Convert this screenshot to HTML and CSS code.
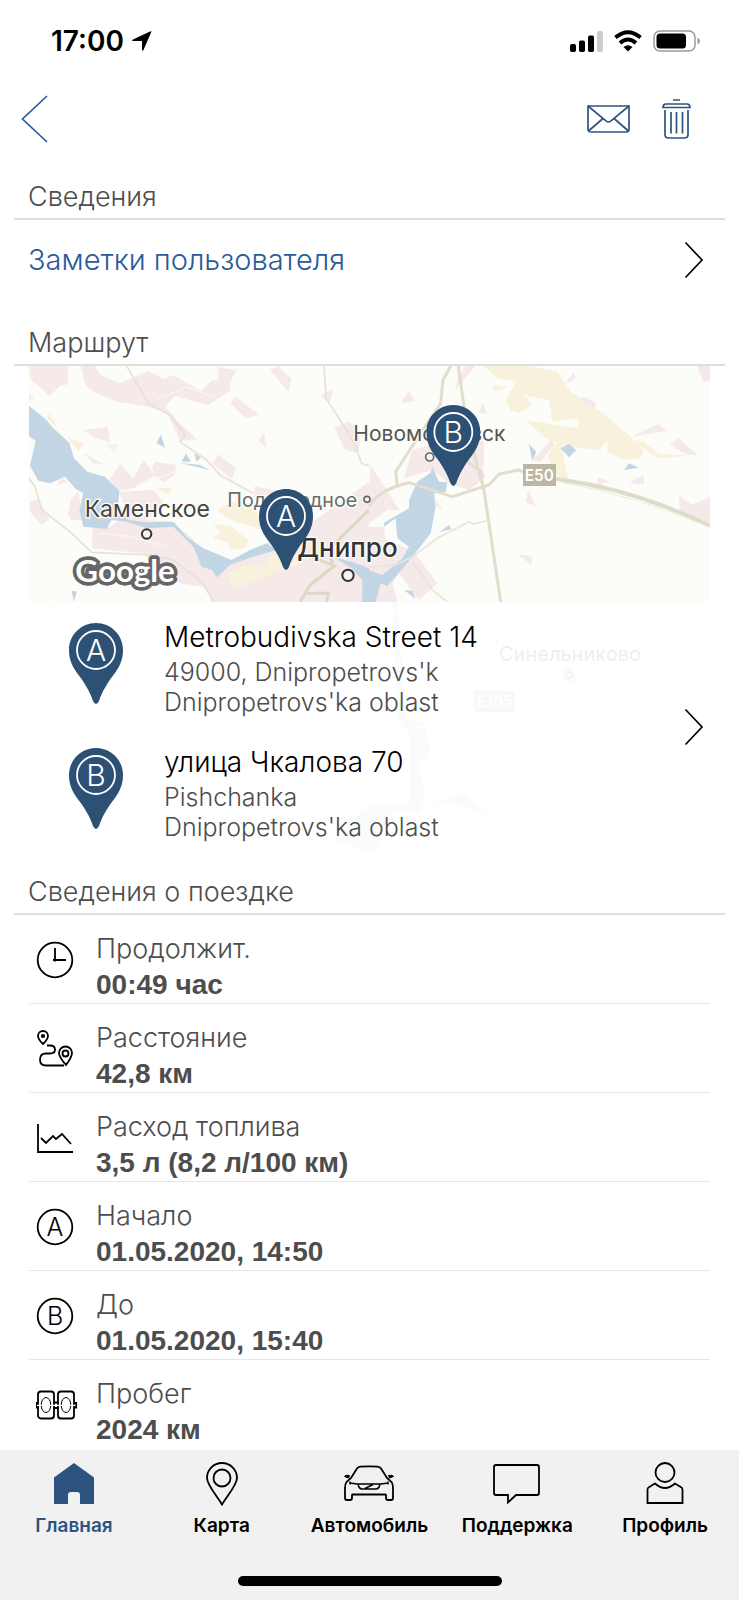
FILE: index.html
```html
<!DOCTYPE html>
<html lang="ru">
<head>
<meta charset="utf-8">
<meta name="viewport" content="width=device-width, initial-scale=1">
<title>Сведения о поездке</title>
<link rel="stylesheet" href="styles.css">
</head>
<body>
<svg class="defs" aria-hidden="true">
  <symbol id="pin" viewBox="0 0 54 81">
    <path fill="#2d5075" d="M27 0C12 0 0 12 0 27c0 9 3 16 8 23 8 10 13 19 16 28q3 6 6 0c3-9 8-18 16-28 5-7 8-14 8-23C54 12 42 0 27 0z"/>
    <circle cx="27" cy="27" r="19" fill="none" stroke="#fff" stroke-width="1.8"/>
  </symbol>
  <symbol id="chevron" viewBox="0 0 20 38">
    <path d="M1.500 1.500L18 19 1.500 36.500" fill="none" stroke="currentColor" stroke-width="1.700"/>
  </symbol>
</svg>
<div class="screen">
  <div class="status">
    <div class="status-left">
      <span class="time">17:00</span>
      <svg width="20" height="20" viewBox="0 0 20 20"><path d="M19.500.5L11.500 19q-1.500 1.500-1.500-.5V10H1.500q-2.500-.3-.5-1.500L18 .6q1.500-.6 1.500-.1z"/></svg>
    </div>
    <div class="status-right">
      <svg width="34" height="22" viewBox="0 0 34 22"><rect x="1" y="14" width="6" height="8" rx="1.700"/><rect x="10" y="10.500" width="6" height="11.500" rx="1.700"/><rect x="19" y="5.500" width="6" height="16.500" rx="1.700"/><rect x="28" y="1" width="6" height="21" rx="1.700" fill="#ccc"/></svg>
      <svg width="30" height="22" viewBox="0 0 30 22"><g fill="none" stroke="#000" stroke-width="4"><path d="M2.500 7.500q12.500-10.500 25 0"/><path d="M7 13q8-7 16 0"/></g><path d="M10.500 17q4.500-3.500 9 0L15 21.500z"/></svg>
      <svg width="48" height="22" viewBox="0 0 48 22"><rect x="1" y="1" width="41" height="20" rx="6" fill="none" stroke="#999" stroke-width="1.500"/><rect x="3.500" y="3.500" width="29.500" height="15" rx="3.500"/><path d="M44.500 7.500q2.500 1 2.500 3.500t-2.500 3.500z" fill="#999"/></svg>
    </div>
  </div>
  <header class="topbar">
    <button class="icon-button" aria-label="Назад"><svg width="27" height="48" viewBox="0 0 27 48"><path d="M26 1L1.500 24 26 47" fill="none" stroke="#2b5a9b" stroke-width="1.700"/></svg></button>
    <div class="actions">
      <button class="icon-button" aria-label="Отправить"><svg width="43" height="28" viewBox="0 0 43 28"><g fill="none" stroke="#2d5480" stroke-width="1.700"><path d="M1 1h41v23q0 3-3 3H4q-3 0-3-3z"/><path d="M1 1l17 14q3.500 4 7 0L42 1M1.500 26L16 13.500M41.500 26L27 13.500"/></g></svg></button>
      <button class="icon-button" aria-label="Удалить"><svg width="29" height="40" viewBox="0 0 29 40"><g fill="none" stroke="#2d5480" stroke-width="1.700"><path d="M11 1h7M1 8.500Q1 5 4 5h21q3 0 3 3.500zM3 11v24.500Q3 39 6.500 39h16q3.500 0 3.500-3.500V11M9 13v21.500M14.500 13v21.500M20.500 13v21.500"/></g></svg></button>
    </div>
  </header>
  <main>
    <h2 class="heading">Сведения</h2>
    <a class="notes" href="#notes">Заметки пользователя<svg class="chevron"><use href="#chevron"/></svg></a>
    <h2 class="heading">Маршрут</h2>
    <a class="route" href="#route">
      <svg class="map" viewBox="87 138 2043 1458" preserveAspectRatio="xMidYMin slice" role="img" aria-label="Карта маршрута">
        <rect x="0" y="0" width="2300" height="1600" fill="#fcfcf8"/>
        <g fill="#f5e9ea">
          <path d="M95 138H203V193L180 198 148 228 90 175zM243 138H285L302 165 360 190 445 152 490 178 520 165 602 212 635 182 655 178 655 142 708 150 690 190 690 212 625 256 525 228 495 262 550 320 592 358 540 362 500 275 430 258 350 245 280 215 257 198zM810 150L835 138 875 178 865 215zM705 230L780 285 737 293 690 250zM250 330L322 320 330 365 285 355zM250 398L312 433 280 430zM775 362L792 340 800 383zM960 225L1000 208 988 250zM1003 323L1050 303 1080 355 1075 400 1035 390zM655 403L708 445 695 478 637 430zM360 433L400 475 430 420 465 465 455 440 465 425 528 435 522 467 490 487 462 468 400 505 358 512 328 480zM168 497L185 475 203 485zM235 515L248 600 215 600 203 585 212 540zM88 545L115 535 147 597 125 615 90 575z"/>
          <path d="M355 515L460 510 490 545 440 600 520 605 580 660 600 710 650 750 760 710 800 670 880 640 960 590 1107 485V846H640L610 800 540 790 490 740 420 700 277 685 277 625 330 620 385 580zM765 498L900 530 910 570 760 530z"/>
        </g>
        <g fill="#f8f1dc">
          <path d="M87 138H98L92 170 87 168zM87 218L105 232 87 245zM148 275L172 325 142 295zM203 350L252 370 235 397zM315 372L358 375 342 397zM462 502L518 505 505 525 550 548zM640 612L690 617 745 660 735 685 695 690 680 665 637 655 662 637zM650 570L700 545 765 560 790 630 690 600zM685 760L740 733 790 740 830 690 890 700 900 730 790 775 700 810z"/>
        </g>
        <g fill="#c2d5e5">
          <path d="M87 257L137 298 160 325 208 368 222 415 262 455 315 470 358 512 355 550 385 600 440 607 520 605 560 650 610 685 695 720 750 690 800 670 830 690 760 710 690 735 650 772 635 750 605 740 580 680 520 620 440 625 380 605 335 600 320 627 250 620 238 570 250 520 225 505 195 470 150 490 115 482 90 437 107 362 87 348zM482 343L495 383 470 370zM558 400L572 425 545 425zM583 400L603 412 590 425zM537 428L600 435 628 450zM215 812L230 815 222 846zM1000 712L1060 727 1107 745V846H1085L1095 790 1055 745z"/>
        </g>
        <g fill="none" stroke="#e6e3d4" stroke-width="5">
          <path d="M380 138L445 250 510 285 555 345 540 365 620 420 660 465 760 520M972 138L978 235 1040 330 1065 375 1085 430 1107 438M87 475L105 500 125 570 210 635 275 697 450 705 520 720 610 790 640 846"/>
          <path d="M900 846L930 795 1000 740 985 690 1107 570M920 820H985L980 846M905 700L1010 740" stroke="#ddd8c3" stroke-width="9"/>
        </g>
        <path d="M430 490L540 450M300 640L390 650 500 680M470 240L560 200 640 230" fill="none" stroke="#fbf6f4" stroke-width="4"/>

        <g transform="translate(1107 0)">
          <g fill="#f8f1dc"><path d="M345 138H480L565 155 605 215 695 275 780 345 825 390 815 415 760 418 700 390 600 380 530 355 470 300 625 325 628 295 550 305 540 240 465 225 490 252 450 280 425 272 410 240 440 185 385 175zM370 205L375 195 418 200 375 215zM790 360L825 365 870 402 970 407 865 414zM555 375L575 365 598 480 570 475 535 410z"/></g>
          <path d="M685 397L715 360V400z" fill="#fcfcf8"/>
          <g fill="#f5e9ea"><path d="M0 500L5 435 92 572 55 570 0 610zM0 620H45L50 660 130 690 205 790 150 840 90 760 70 790 85 846H0zM95 250L120 212 138 242zM290 138H318L260 210 265 180zM340 248L355 283 330 278zM587 193L615 157 620 175zM630 240L645 230 682 248 675 265zM788 350L868 312 893 332zM903 372L930 355 985 405 950 403zM780 490L822 465 825 492zM685 472L720 483 688 498zM930 527L970 555 1023 530V610L932 572zM470 545L477 510 502 562zM448 705L488 707V735zM985 138H1023V180L1003 186zM105 475L130 390 210 370 240 430 325 400 350 470 300 510 240 490 190 450zM195 535L222 570 205 560zM490 420L550 357 555 375 515 425zM300 300L345 370 345 440 310 420z"/></g>
          <g fill="#c2d5e5"><path d="M145 485L185 458 190 440 210 485 235 487 230 515 195 520 200 560 185 640 150 685 110 735 55 798 35 790 20 846H-20V745L40 765 100 715 120 680 85 655 80 595 45 620 45 608 120 565 120 540zM480 372L502 395 490 422zM575 385L600 372 622 390 600 412zM765 450L780 430 810 443zM212 637L240 615 247 627zM105 810L130 812 140 837z"/></g>
          <g fill="none" stroke="#e2decb" stroke-width="9"><path d="M245 138L222 180 215 250 145 355 80 455 85 500M268 138L285 260 320 420 345 510 395 846M0 560Q25 510 120 488L250 530 360 495 390 463 445 450 480 460M295 425L335 455 340 490"/></g>
          <g fill="none" stroke="#e9e6d9" stroke-width="5"><path d="M352 603L310 612 300 605 205 655 130 710 80 735 0 742M130 725L190 810 235 846"/></g>
          <path d="M480 460L580 480Q800 510 1023 618" fill="none" stroke="#dfdbc9" stroke-width="12"/>
          <path d="M580 487Q800 528 1023 622" fill="none" stroke="#eeebdd" stroke-width="3"/>
          <g fill="#c2d5e5"><path d="M70 846L85 1190 120 1240 125 1420 115 1450 0 1460-60 1500-100 1560 0 1596H20L60 1480 150 1480 170 1430 150 1330 185 1290 165 1210 110 1190 85 846zM185 1450L280 1420 345 1475 260 1455z"/></g>
          <g fill="#f5e9ea"><circle cx="600" cy="1065" r="28"/></g>
          <path d="M395 846L350 1300 345 1480 280 1596M345 1475L640 1560 870 1490 1010 1550M600 890L660 940M0 1220H200" fill="none" stroke="#ebe8dc" stroke-width="6"/>
        </g>
        <path d="M130 850L480 980M87 1150L280 1040M410 860L500 980" fill="none" stroke="#ebe8dc" stroke-width="5"/>

        <g class="place">
          <text x="1060" y="362" font-size="63">Новомосковск</text>
          <text x="682" y="560" font-size="59" fill="#6b6b6b">Подгородное</text>
          <text class="city" x="254" y="590" font-size="69">Каменское</text>
          <text class="capital" x="892" y="710" font-size="78">Днипро</text>
          <text x="1497" y="1022" font-size="60">Синельниково</text>
        </g>
        <g fill="#f4f4f4" stroke="#333" stroke-width="6"><circle cx="440" cy="642" r="14"/><circle cx="1044" cy="766" r="17"/><g stroke="#666" stroke-width="5"><circle cx="1289" cy="411" r="12"/><circle cx="1101" cy="538" r="9"/><circle cx="1707" cy="1065" r="10"/></g></g>
        <g fill="#bcb6a5"><rect x="1569" y="432" width="99" height="66"/><rect x="1424" y="1112" width="120" height="64"/></g>
        <g class="badge"><text x="1618" y="483">E50</text><text x="1484" y="1162">E105</text></g>
        <text class="google" x="226" y="786">Google</text>
        <use href="#pin" x="777" y="507" width="162" height="243"/>
        <use href="#pin" x="1279" y="255" width="162" height="243"/>
        <g class="pin-letter"><text x="858" y="620">A</text><text x="1360" y="368">B</text></g>
      </svg>
      <div class="stops">
        <div class="stop">
          <svg class="pin" viewBox="0 0 54 81"><use href="#pin"/><text x="27" y="38">A</text></svg>
          <div><div class="street">Metrobudivska Street 14</div><div class="region">49000, Dnipropetrovs'k<br>Dnipropetrovs'ka oblast</div></div>
        </div>
        <div class="stop">
          <svg class="pin" viewBox="0 0 54 81"><use href="#pin"/><text x="27" y="38">B</text></svg>
          <div><div class="street">улица Чкалова 70</div><div class="region">Pishchanka<br>Dnipropetrovs'ka oblast</div></div>
        </div>
        <svg class="chevron"><use href="#chevron"/></svg>
      </div>
    </a>
    <h2 class="heading">Сведения о поездке</h2>
    <dl class="details">
      <div class="detail"><svg viewBox="0 0 42 38"><circle cx="19" cy="19" r="17.300"/><path d="M19 7v13.500M17 19h13"/></svg><div><dt>Продолжит.</dt><dd>00:49 час</dd></div></div>
      <div class="detail"><svg viewBox="0 0 42 38"><path d="M7 14Q2 9 2 6a5 5 0 0 1 10 0q0 3-5 8zM30 35q-7-8-7-12a6.500 6.500 0 0 1 13 0q0 4-6 12zM11 15.500h3q5 0 5 4t-5 4h-4q-6 0-6 6t6 6h18"/><circle cx="7" cy="6" r="1.200"/><circle cx="29.500" cy="23.500" r="3"/></svg><div><dt>Расстояние</dt><dd>42,8 км</dd></div></div>
      <div class="detail"><svg viewBox="0 0 42 38"><path d="M2 5v28h35M5 19l5 5 7-7 3 3 6-5 9 10"/></svg><div><dt>Расход топлива</dt><dd>3,5 л (8,2 л/100 км)</dd></div></div>
      <div class="detail"><svg viewBox="0 0 42 38"><circle cx="19" cy="19" r="17.300"/><text x="19" y="28">A</text></svg><div><dt>Начало</dt><dd>01.05.2020, 14:50</dd></div></div>
      <div class="detail"><svg viewBox="0 0 42 38"><circle cx="19" cy="19" r="17.300"/><text x="19" y="28">B</text></svg><div><dt>До</dt><dd>01.05.2020, 15:40</dd></div></div>
      <div class="detail"><svg viewBox="0 0 42 38"><rect x="2" y="5.500" width="16" height="27" rx="3"/><rect x="22" y="5.500" width="16" height="27" rx="3"/><path d="M2 17H.8v4.500H2M38 17h2.200v4.500H38M18 16.500h4M18 22h4"/><g stroke-width="1"><ellipse cx="10" cy="19" rx="4.800" ry="7.500"/><ellipse cx="30" cy="19" rx="4.800" ry="7.500"/></g><path d="M1 19.300h38" stroke="#fff" stroke-width="1.300"/></svg><div><dt>Пробег</dt><dd>2024 км</dd></div></div>
    </dl>
  </main>
  <footer class="bottom">
    <nav class="tabs">
      <a class="tab active" href="#home"><svg viewBox="0 0 54 44"><path d="M27 1L47 15.500V42H33V33q0-3-3-3h-6q-3 0-3 3v9H7V15.500z" fill="currentColor" stroke="none"/></svg>Главная</a>
      <a class="tab" href="#map"><svg viewBox="0 0 54 44"><path d="M27 42.500C22 34 12 23 12 16a15 15 0 0 1 30 0c0 7-10 18-15 26.500z"/><circle cx="27" cy="16" r="8.500"/></svg>Карта</a>
      <a class="tab" href="#car"><svg viewBox="0 0 54 44"><path d="M9 16l6-9.500Q16 5 18.500 4.700q8.500-.7 17 0Q38 5 39 6.500L45 16l4.500 4q1.500 2 1.500 6v10q0 2-2 2h-3q-2 0-2-2v-3q0-.5-1-.5H11q-1 0-1 .5v3q0 2-2 2H5q-2 0-2-2V26q0-4 1.500-6z"/><path d="M2.500 14.500q.5-2 5-1l-1 2.500zM51.500 14.500q-.5-2-5-1l1 2.500z" fill="currentColor" stroke-width="1"/><path d="M8 19.500v3M46 19.500v3M8 21l7 1h24l7-1M16 22q1 5 4 5h14q3 0 4-5M23 26.500l8-4" stroke-width="1.500"/></svg>Автомобиль</a>
      <a class="tab" href="#support"><svg viewBox="0 0 54 44"><path d="M6 3h41q2 0 2 2v26q0 2-2 2H26l-8 7.500V33H6q-2 0-2-2V5q0-2 2-2z"/></svg>Поддержка</a>
      <a class="tab" href="#profile"><svg viewBox="0 0 54 44"><circle cx="27" cy="10.500" r="9.500"/><path d="M17 21.500l-6.500 4Q9.500 26 9.500 28v13h35V28q0-2-1-2.500l-6.500-4q-10 9-20 0z"/></svg>Профиль</a>
    </nav>
    <div class="home-bar"></div>
  </footer>
</div>
</body>
</html>
```
FILE: styles.css
```css
* { box-sizing: border-box; }
body { margin: 0; background: #fff; color: #4d4d4d; font-family: Inter, "Liberation Sans", sans-serif; font-weight: 300; }
a { color: inherit; text-decoration: none; }
.defs { position: absolute; width: 0; height: 0; }
.screen { display: flex; flex-direction: column; min-height: 100vh; }
.status { display: flex; justify-content: space-between; align-items: center; height: 80px; padding: 2px 38px 0 51px; }
.status-left { display: flex; align-items: center; gap: 8px; }
.status-right { display: flex; align-items: center; gap: 10px; }
.time { font-size: 28px; font-weight: 600; color: #000; }
.topbar { display: flex; justify-content: space-between; align-items: center; height: 80px; padding: 0 48px 2px 21px; }
.actions { display: flex; align-items: center; gap: 32px; }
.icon-button { display: block; padding: 0; border: 0; background: none; }
.icon-button svg { display: block; }
.heading { margin: 0 14px; padding: 0 14px; height: 60px; border-bottom: 2px solid #dedede; font-size: 27px; font-weight: 300; line-height: 74px; }
.notes { display: flex; align-items: center; justify-content: space-between; height: 86px; padding: 0 35px 6px 28px; font-size: 29px; line-height: 32px; color: #2b5a9b; }
.chevron { width: 20px; height: 38px; color: #000; }
.route { display: grid; margin: 0 29px 3px; }
.map { grid-area: 1 / 1; width: 100%; height: 486px; }
.map text { font-family: Inter, "Liberation Sans", sans-serif; }
.place { fill: #555; font-weight: 400; stroke: #fcfcf8; stroke-width: 8px; paint-order: stroke; }
.city { fill: #444; }
.capital { fill: #333; font-weight: 500; }
.badge { fill: #fff; font-size: 46px; font-weight: 600; text-anchor: middle; }
.map .google { fill: #fff; stroke: #666; stroke-width: 22px; stroke-linejoin: round; paint-order: stroke; font-size: 94px; font-family: Lato, sans-serif; font-weight: 700; }
.pin-letter { fill: #fff; font-size: 90px; font-weight: 300; text-anchor: middle; }
.stops { grid-area: 1 / 1; align-self: end; display: grid; grid-template-columns: 1fr auto; align-items: center; height: 250px; padding-right: 6px; background: rgba(255, 255, 255, .9); }
.stops .chevron { grid-column: 2; grid-row: 1 / 3; }
.stop { display: grid; grid-template-columns: 95px 1fr; align-items: start; height: 125px; padding: 16px 0 0 40px; }
.pin { width: 54px; height: 81px; margin-top: 5px; }
.pin text { fill: #fff; font-size: 30px; text-anchor: middle; }
.street { font-size: 28px; line-height: 38px; color: #000; }
.region { padding-top: 1px; font-size: 25px; line-height: 30px; }
.details { margin: 0 29px; }
.detail { display: flex; gap: 18px; height: 89px; padding: 16px 0 0 7px; border-bottom: 1px solid #e6e6e6; }
.detail:last-child { border: 0; }
.detail svg { width: 42px; height: 38px; margin-top: 10px; fill: none; stroke: #000; stroke-width: 1.8px; }
.detail text { fill: #000; stroke: none; font-size: 25px; text-anchor: middle; }
dt { font-size: 27px; line-height: 36px; }
dd { margin: 0; font-family: "Liberation Sans", sans-serif; font-size: 28px; line-height: 36px; font-weight: 700; }
.bottom { display: flex; flex-direction: column; justify-content: space-between; align-items: center; height: 150px; margin-top: auto; padding-bottom: 14px; background: #f1f1f1; }
.tabs { display: grid; grid-template-columns: repeat(5, 1fr); width: 100%; padding-top: 12px; }
.tab { display: flex; flex-direction: column; align-items: center; gap: 8px; font-size: 19px; font-weight: 600; line-height: 24px; color: #000; }
.tab svg { width: 54px; height: 44px; fill: none; stroke: currentColor; stroke-width: 1.8px; }
.active { color: #2d5480; }
.home-bar { width: 264px; height: 10px; border-radius: 5px; background: #000; }
```
